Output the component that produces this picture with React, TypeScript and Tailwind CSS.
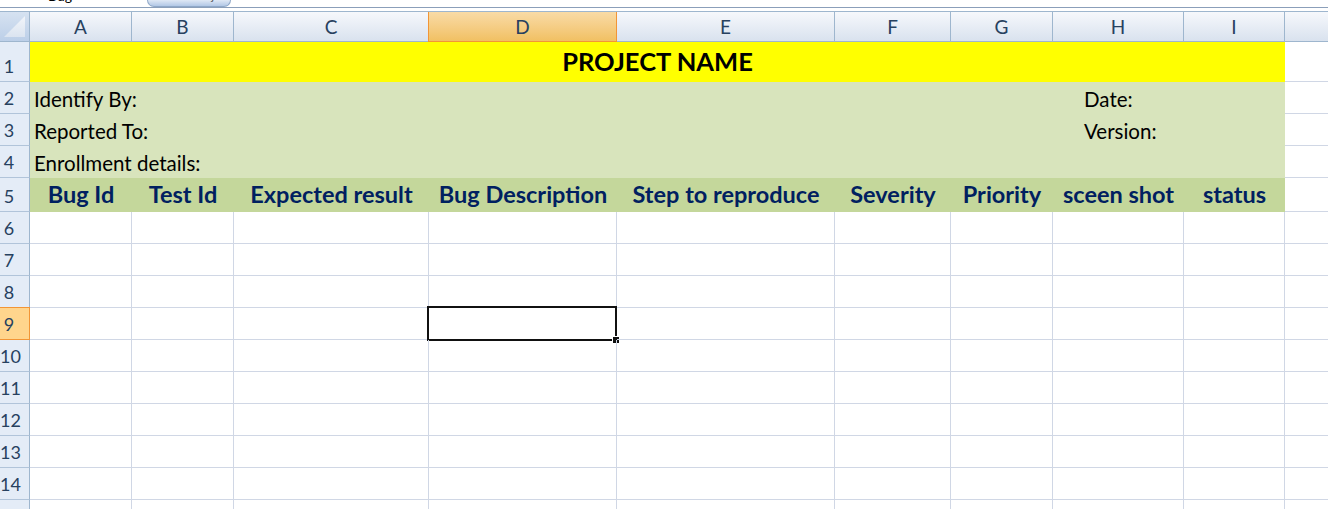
import React from "react";

const COLS = ["A", "B", "C", "D", "E", "F", "G", "H", "I"];
const HEADERS = [
  "Bug Id",
  "Test Id",
  "Expected result",
  "Bug Description",
  "Step to reproduce",
  "Severity",
  "Priority",
  "sceen shot",
  "status",
];

// column widths match the sheet: row header, A..I, then J fills the rest
const grid =
  "grid grid-cols-[30px_102px_102px_195px_188px_218px_116px_102px_131px_101px_1fr]";

const gridLine = "border-r border-b border-[#d0d7e5]";

function RowHead({ n, selected }: { n: number; selected?: boolean }) {
  return (
    <div
      className={`flex items-end overflow-hidden border-r border-b pb-[6px] ${
        selected
          ? "border-[#f29536] border-t bg-[#ffd58d] -mt-px"
          : "border-[#b1c4da] border-r-[#9eb6ce] bg-[#e4ecf7]"
      }`}
    >
      <span className="w-[18px] text-center text-[18px] leading-none text-[#27415f]">
        {n}
      </span>
    </div>
  );
}

function DataRow({ n }: { n: number }) {
  return (
    <div className={`${grid} h-[32px]`}>
      <RowHead n={n} selected={n === 9} />
      {COLS.map((c) => (
        <div key={c} className={`relative ${gridLine}`}>
          {n === 9 && c === "D" && (
            <div className="absolute -left-[2px] -top-[2px] -right-px -bottom-[2px] border-[2.5px] border-[#111]">
              <div className="absolute -right-[4px] -bottom-[4px] h-[7px] w-[7px] border-l border-t border-white bg-[#111]" />
            </div>
          )}
        </div>
      ))}
      <div className="border-b border-[#d0d7e5]" />
    </div>
  );
}

export default function App() {
  return (
    <div className="h-[509px] w-[1328px] overflow-hidden bg-white font-['Lato',sans-serif] text-black">
      {/* sheet tabs strip, cut off at the top */}
      <div className="flex h-[7px] overflow-hidden bg-white">
        <div className="w-[147px] overflow-hidden pl-[48px]">
          <span className="-mt-[13px] block text-[14px] leading-[18px]">Bug</span>
        </div>
        <div className="flex h-[7px] w-[84px] justify-end rounded-b-[7px] border border-t-0 border-[#8fa8c8] bg-linear-to-b from-[#dfe8f5] to-[#b2c8e6] pr-[10px]">
          <span className="-mt-[12px] block text-[12px] leading-[16px] text-[#555]">ja</span>
        </div>
      </div>
      <div className="h-px bg-[#8b9fba]" />
      <div className="h-[3px] bg-white" />

      {/* column headers */}
      <div className={`${grid} h-[31px] border-t border-[#9eb6ce]`}>
        <div className="relative border-r border-b border-[#9eb6ce] bg-linear-to-b from-[#d6e2f1] to-[#bccfe8]">
          <svg className="absolute left-0 top-0" width="29" height="29" viewBox="0 0 29 29">
            <defs>
              <linearGradient id="tri" x1="0" y1="0" x2="0" y2="1">
                <stop offset="0" stopColor="#f2f5fa" />
                <stop offset="1" stopColor="#dbe4f0" />
              </linearGradient>
            </defs>
            <polygon points="25,4 25,25 4,25" fill="url(#tri)" />
          </svg>
        </div>
        {COLS.map((c) => (
          <div
            key={c}
            className={`flex items-center justify-center border-r border-b text-[19px] leading-none text-[#27415f] ${
              c === "D"
                ? "border-[#f29536] border-l -ml-px bg-linear-to-b from-[#f9dba6] to-[#f1c062]"
                : "border-[#9eb6ce] bg-linear-to-b from-[#f6f8fc] to-[#d9e2ee]"
            }`}
          >
            {c}
          </div>
        ))}
        <div className="border-b border-[#9eb6ce] bg-linear-to-b from-[#f6f8fc] to-[#d9e2ee]" />
      </div>

      {/* row 1: title */}
      <div className={`${grid} h-[40px]`}>
        <RowHead n={1} />
        <div className="col-span-9 flex items-center justify-center bg-[#ffff00] text-[25.5px] font-bold leading-none">
          PROJECT NAME
        </div>
        <div className="border-b border-[#d0d7e5]" />
      </div>

      {/* rows 2-4: details */}
      {[
        ["Identify By:", "Date:"],
        ["Reported To:", "Version:"],
        ["Enrollment details:", ""],
      ].map(([left, right], i) => (
        <div key={left} className={`${grid} h-[32px]`}>
          <RowHead n={i + 2} />
          <div className="col-span-7 flex items-end bg-[#d8e4bc] pb-[5px] pl-[4px] text-[20.5px] leading-none">
            {left}
          </div>
          <div className="col-span-2 flex items-end bg-[#d8e4bc] pb-[5px] pl-[31px] text-[20.5px] leading-none">
            {right}
          </div>
          <div className="border-b border-[#d0d7e5]" />
        </div>
      ))}

      {/* row 5: column titles */}
      <div className={`${grid} h-[34px]`}>
        <RowHead n={5} />
        {HEADERS.map((h) => (
          <div
            key={h}
            className="flex items-center justify-center whitespace-nowrap bg-[#c4d79b] text-[23.5px] font-bold leading-none text-[#002060]"
          >
            {h}
          </div>
        ))}
        <div className="border-b border-[#d0d7e5]" />
      </div>

      {[6, 7, 8, 9, 10, 11, 12, 13, 14, 15].map((n) => (
        <DataRow key={n} n={n} />
      ))}
    </div>
  );
}
